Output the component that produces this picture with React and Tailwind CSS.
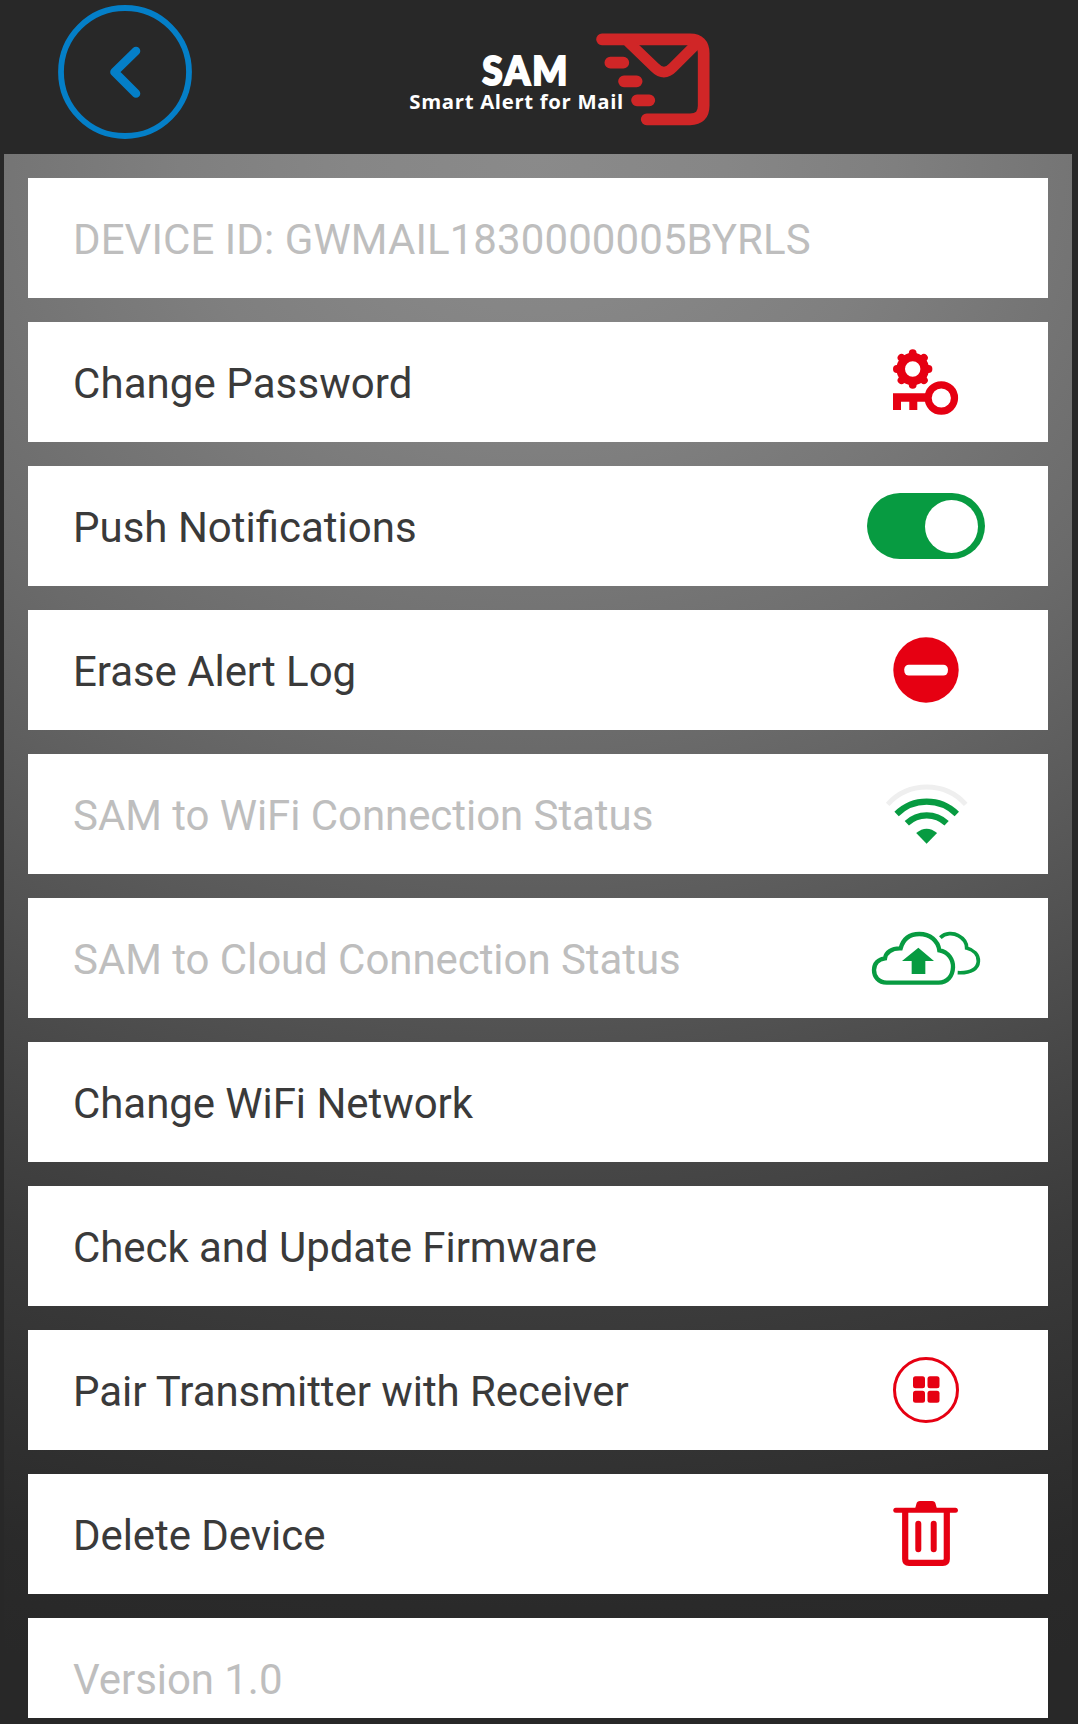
import React, { useState } from "react";

const GEAR_TEETH = [0, 45, 90, 135, 180, 225, 270, 315];

const RowIcon = ({ children }) => (
  <svg viewBox="0 0 120 120" className="w-[120px] h-[120px] shrink-0">
    {children}
  </svg>
);

const PasswordIcon = () => (
  <RowIcon>
    <g stroke="#e60012" fill="none">
      <circle cx="46.7" cy="47" r="12" strokeWidth="8.6" />
      {GEAR_TEETH.map((angle) => (
        <path
          key={angle}
          d="M46.7 34V31.2"
          strokeWidth="7.8"
          strokeLinecap="round"
          transform={`rotate(${angle} 46.7 47)`}
        />
      ))}
      <circle cx="75.3" cy="76" r="13.2" strokeWidth="7.2" />
    </g>
    <path
      d="M27 71.3H63V79.8H51.3V88H43.3V79.8H35V88H27Z"
      fill="#e60012"
    />
  </RowIcon>
);

const EraseIcon = () => (
  <RowIcon>
    <circle cx="60" cy="60" r="32.7" fill="#e60012" />
    <rect x="38.3" y="54.8" width="43.6" height="10.8" rx="4.5" fill="#fff" />
  </RowIcon>
);

const WifiIcon = () => (
  <RowIcon>
    <g fill="none" stroke="#079b41" strokeWidth="6.2">
      <path
        d="M21.7 50.3A52.6 52.6 0 0 1 99.7 50.3"
        stroke="#efefef"
        strokeWidth="4.8"
      />
      <path d="M30.6 60A42.9 42.9 0 0 1 90.8 60" />
      <path d="M40.8 69.3A28.9 28.9 0 0 1 80.6 69.3" />
    </g>
    <path d="M50.2 79Q60.6 70.4 71.1 79L60.6 89.7Z" fill="#079b41" />
  </RowIcon>
);

const CloudIcon = () => (
  <svg viewBox="18 -66 360 360" className="w-[120px] h-[120px] shrink-0">
    <g fill="none" stroke="#079b41" strokeWidth="11">
      <path
        strokeWidth="13"
        d="M80 188C55 188 42 170 42 150C42 131 55 117 75 115C77 98 95 84 122 85C130 55 150 42 178 42C210 42 234 62 238 91C265 95 280 120 279 142C278 168 262 188 236 188Z"
      />
      <path d="M241 53C256 38 280 38 295 47C312 56 320 68 320 84C342 90 356 105 355 124C354 145 335 160 293 158" />
    </g>
    <path d="M175 83L222 123H196V162H155V123H126Z" fill="#079b41" />
  </svg>
);

const PairIcon = () => (
  <RowIcon>
    <circle cx="60" cy="60" r="31.5" fill="none" stroke="#e60012" strokeWidth="3" />
    <g fill="#e60012">
      <rect x="47" y="46.3" width="12" height="12" rx="2.5" />
      <rect x="61.5" y="46.3" width="12" height="12" rx="2.5" />
      <rect x="47" y="60.8" width="12" height="12" rx="2.5" />
      <rect x="61.5" y="60.8" width="12" height="12" rx="2.5" />
    </g>
  </RowIcon>
);

const TrashIcon = () => (
  <RowIcon>
    <g fill="none" stroke="#e60012" strokeLinecap="round">
      <path d="M29.8 36.2H89.4" strokeWidth="5" />
      <path
        d="M39.2 37V85Q39.2 88.8 43 88.8H76.8Q80.8 88.8 80.8 85V37"
        strokeWidth="6.2"
      />
      <path d="M52.3 49.8V75.2M67.7 49.8V75.2" strokeWidth="6" />
    </g>
    <path d="M49 35L50.5 29.5Q51 27 54 27H66Q69 27 69.5 29.5L71 35Z" fill="#e60012" />
  </RowIcon>
);

const Toggle = ({ checked, onChange }) => (
  <button
    role="switch"
    aria-checked={checked}
    onClick={() => onChange(!checked)}
    className={`flex items-center w-[118px] h-[66px] mr-px rounded-full px-[7px] ${
      checked ? "bg-[#079b41] justify-end" : "bg-gray-300 justify-start"
    }`}
  >
    <span className="w-[53px] h-[53px] rounded-full bg-white" />
  </button>
);

const Logo = () => (
  <svg viewBox="0 0 1020 360" className="w-[340px] h-[120px]">
    <g fill="#fff">
      <text
        x="277"
        y="194"
        fontSize="118"
        fontWeight="900"
        textLength="262"
        lengthAdjust="spacingAndGlyphs"
        letterSpacing="7"
        fontFamily="Lato, sans-serif"
        stroke="#fff"
        strokeWidth="6"
      >
        SAM
      </text>
      <text
        x="58"
        y="266"
        fontSize="61"
        fontWeight="700"
        textLength="642"
        fontFamily="'Open Sans', sans-serif"
      >
        Smart Alert for Mail
      </text>
    </g>
    <g fill="none" stroke="#d02627" strokeWidth="35" strokeLinecap="round">
      <path d="M636 58H900Q941 58 941 99V257Q941 298 900 298H770" />
      <path d="M715 66L795 143Q822 170 848 143L925 66" strokeWidth="32" />
      <path d="M661 128H700M702 184H740M741 241H778" />
    </g>
  </svg>
);

const Header = () => (
  <header className="flex h-[154px] bg-[#282828]">
    <button className="w-[134px] h-[134px] mt-[5px] ml-[58px]" aria-label="Back">
      <svg viewBox="0 0 134 134" fill="none" stroke="#047fc8">
        <circle cx="67" cy="67" r="64" strokeWidth="5.8" />
        <path
          d="M78 46L56.5 67L78 88.5"
          strokeWidth="8.6"
          strokeLinecap="round"
          strokeLinejoin="round"
        />
      </svg>
    </button>
    <div className="ml-[198px] mt-5">
      <Logo />
    </div>
  </header>
);

const SettingRow = ({ label, muted, tracking = "tracking-[-0.06px]", children }) => (
  <div className="flex items-center justify-between h-[120px] bg-white pl-[45px] pr-[62px] shrink-0">
    <span
      className={`text-[42px] leading-[50px] whitespace-nowrap pt-[3px] ${tracking} ${
        muted ? "text-[#bebebe]" : "text-[#3a3a3a]"
      }`}
    >
      {label}
    </span>
    {children}
  </div>
);

const App = () => {
  const [pushEnabled, setPushEnabled] = useState(true);

  return (
    <div className="w-[1078px] h-[1724px] overflow-hidden bg-[#282828] font-[Roboto,sans-serif]">
      <Header />
      <main className="flex flex-col gap-6 w-[1068px] h-[1564px] ml-1 px-6 pt-6 overflow-hidden bg-[radial-gradient(1880px_1564px_at_50%_0%,#8a8a8a_0%,#868686_10%,#7f7f7f_19%,#757575_28%,#6a6a6a_38%,#5e5e5e_47%,#525252_56%,#464646_65%,#3b3b3b_74%,#323232_84%,#2a2a2a_93%,#282828_100%)]">
        <SettingRow
          label="DEVICE ID: GWMAIL1830000005BYRLS"
          tracking="tracking-[0.09px]"
          muted
        />
        <SettingRow label="Change Password" tracking="tracking-[0.08px]">
          <PasswordIcon />
        </SettingRow>
        <SettingRow label="Push Notifications" tracking="tracking-normal">
          <Toggle checked={pushEnabled} onChange={setPushEnabled} />
        </SettingRow>
        <SettingRow label="Erase Alert Log">
          <EraseIcon />
        </SettingRow>
        <SettingRow label="SAM to WiFi Connection Status" muted>
          <WifiIcon />
        </SettingRow>
        <SettingRow label="SAM to Cloud Connection Status" muted>
          <CloudIcon />
        </SettingRow>
        <SettingRow label="Change WiFi Network" />
        <SettingRow label="Check and Update Firmware" />
        <SettingRow label="Pair Transmitter with Receiver">
          <PairIcon />
        </SettingRow>
        <SettingRow label="Delete Device">
          <TrashIcon />
        </SettingRow>
        <SettingRow label="Version 1.0" muted />
      </main>
    </div>
  );
};

export default App;
